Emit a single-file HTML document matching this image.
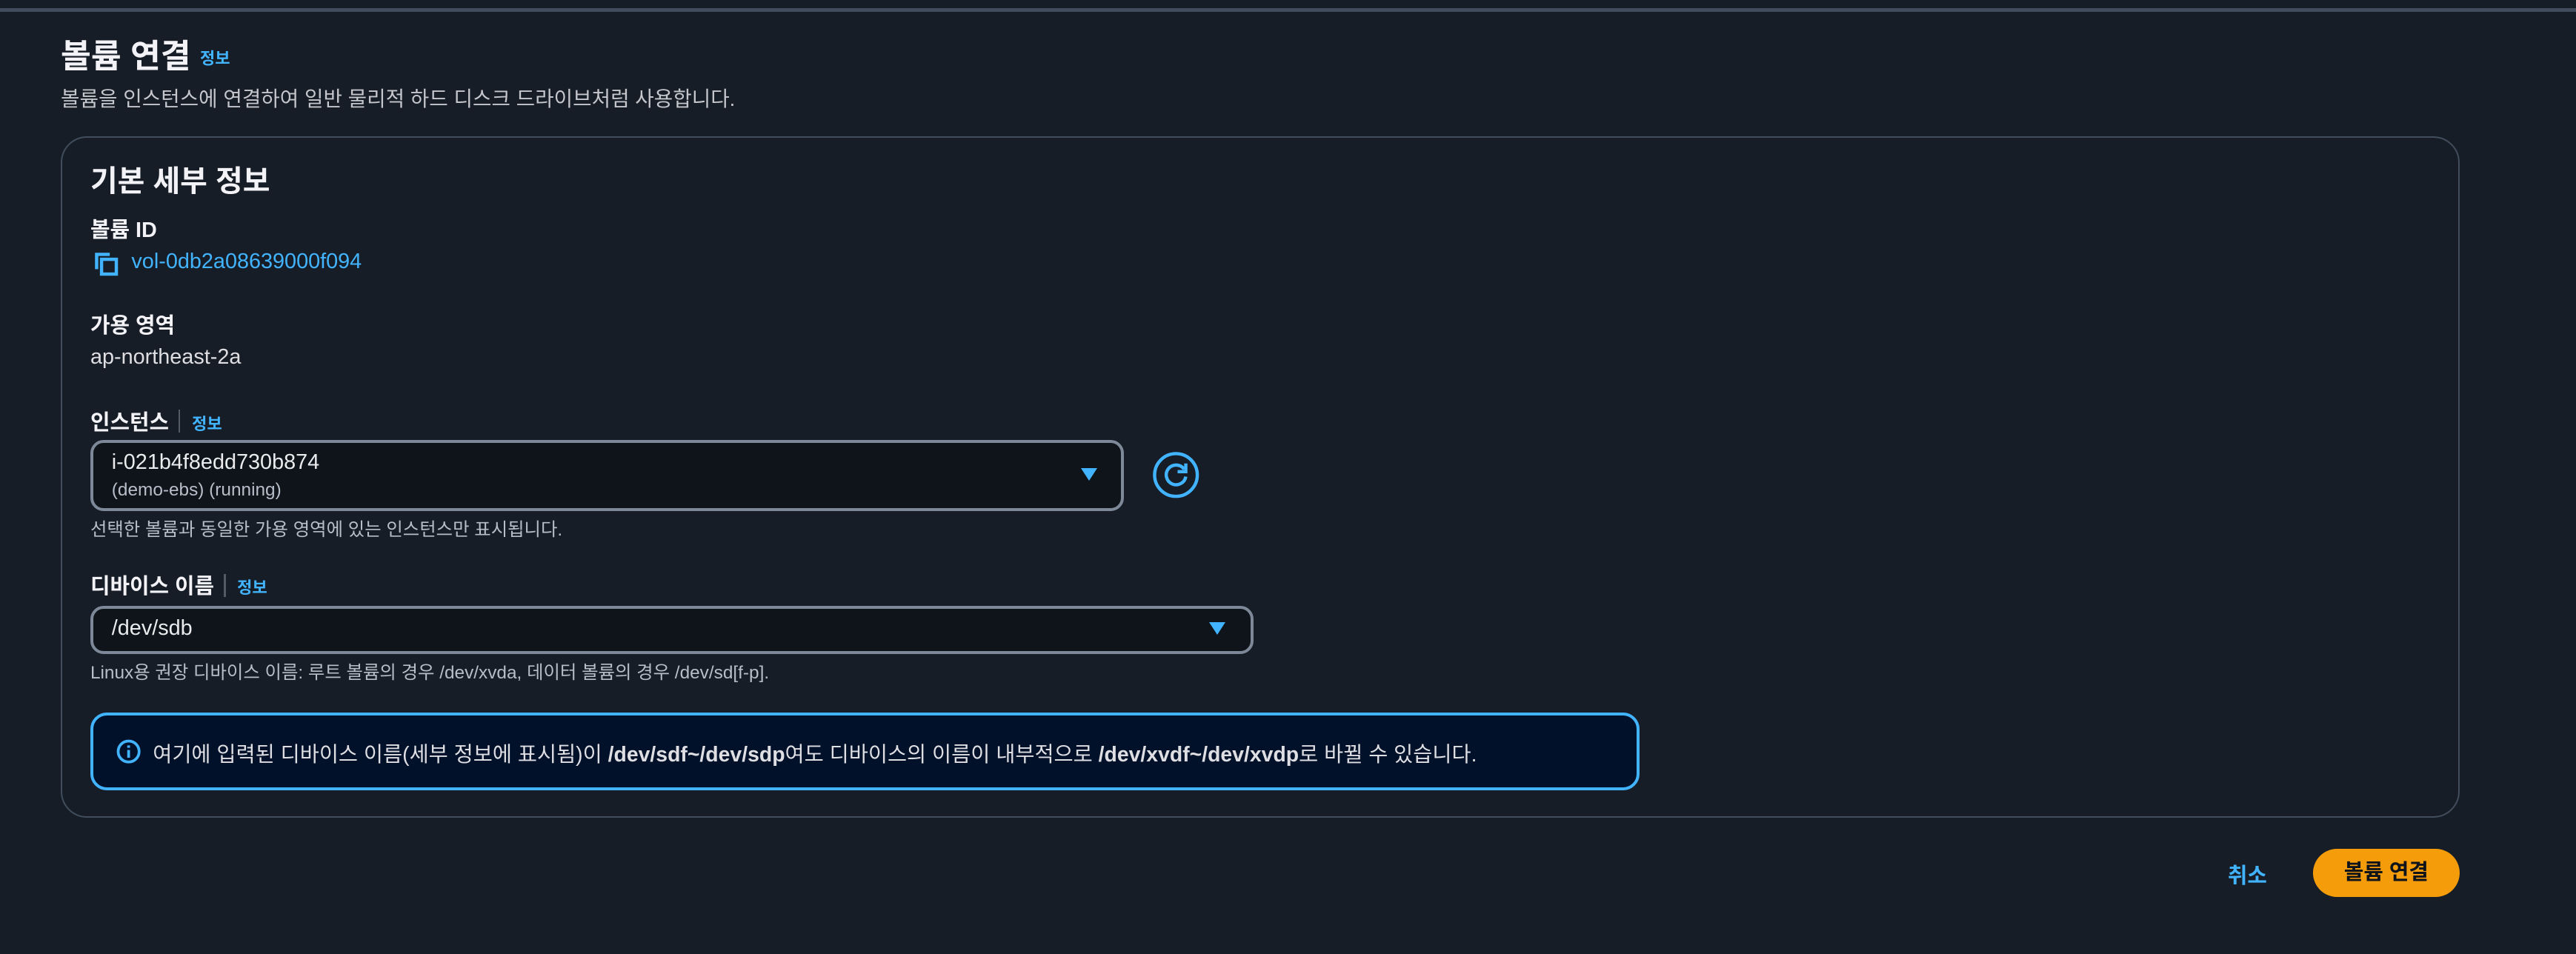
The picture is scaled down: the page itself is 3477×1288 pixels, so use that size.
<!DOCTYPE html>
<html><head><meta charset="utf-8"><style>
html,body{margin:0;padding:0;background:#161d26;}
body{width:3477px;height:1288px;overflow:hidden;}
#w{zoom:2.2175;width:1568px;height:581px;position:relative;font-family:"Liberation Sans","Noto Sans CJK KR",sans-serif;color:#dedee3;}
.a{position:absolute;white-space:nowrap;}
.lnk{color:#42b4ff;}
.b{font-weight:bold;}
.sel{position:absolute;border:2px solid #7d8998;border-radius:8px;box-sizing:border-box;background:#0f141a;}
.car{position:absolute;width:0;height:0;border-left:5px solid transparent;border-right:5px solid transparent;border-top:8px solid #42b4ff;}
.lbl{font-size:13px;font-weight:bold;color:#f3f3f7;}
.hint{font-size:11px;color:#b6bec9;}
.sep{display:inline-block;width:1px;height:14px;background:#545b64;vertical-align:-2px;margin:0 7px 0 6px;}
</style></head><body><div id="w">
<div class="a" style="left:0;top:5px;width:1568px;height:2px;background:#414d5c"></div>
<div class="a" style="left:37px;top:18px;font-size:20px;font-weight:bold;color:#f3f3f7">볼륨 연결 <span class="lnk" style="font-size:10px;vertical-align:2px">정보</span></div>
<div class="a" style="left:37px;top:50px;font-size:12.5px;color:#c6c6cd">볼륨을 인스턴스에 연결하여 일반 물리적 하드 디스크 드라이브처럼 사용합니다.</div>
<div class="a" style="left:37px;top:83px;width:1460px;height:415px;box-sizing:border-box;border:1px solid #414d5c;border-radius:16px"></div>
<div class="a" style="left:55px;top:96px;font-size:18px;font-weight:bold;color:#f3f3f7">기본 세부 정보</div>
<div class="a lbl" style="left:55px;top:130px">볼륨 ID</div>
<svg class="a" style="left:57px;top:153px" width="16" height="16" viewBox="0 0 16 16"><path d="M2 11V2h8" fill="none" stroke="#42b4ff" stroke-width="2"/><rect x="5" y="5" width="9" height="9" fill="none" stroke="#42b4ff" stroke-width="2"/></svg>
<div class="a lnk" style="left:80px;top:152px;font-size:13px">vol-0db2a08639000f094</div>
<div class="a lbl" style="left:55px;top:188px">가용 영역</div>
<div class="a" style="left:55px;top:210px;font-size:13px">ap-northeast-2a</div>
<div class="a lbl" style="left:55px;top:247px">인스턴스<span class="sep"></span><span class="lnk" style="font-size:10px">정보</span></div>
<div class="sel" style="left:55px;top:268px;width:629px;height:43px"></div>
<div class="a" style="left:68px;top:274px;font-size:13px;color:#e9ebed">i-021b4f8edd730b874</div>
<div class="a" style="left:68px;top:292px;font-size:11px;color:#b6bec9">(demo-ebs) (running)</div>
<div class="car" style="left:658px;top:285px"></div>
<svg class="a" style="left:701px;top:274px" width="30" height="30" viewBox="0 0 30 30"><circle cx="15" cy="15" r="13" fill="none" stroke="#42b4ff" stroke-width="2"/><path d="M20 11.5A6 6 0 1 0 21 16" fill="none" stroke="#42b4ff" stroke-width="2"/><path d="M21 8v5h-5" fill="none" stroke="#42b4ff" stroke-width="2"/></svg>
<div class="a hint" style="left:55px;top:314px">선택한 볼륨과 동일한 가용 영역에 있는 인스턴스만 표시됩니다.</div>
<div class="a lbl" style="left:55px;top:347px">디바이스 이름<span class="sep"></span><span class="lnk" style="font-size:10px">정보</span></div>
<div class="sel" style="left:55px;top:369px;width:708px;height:29px"></div>
<div class="a" style="left:68px;top:375px;font-size:13px;color:#e9ebed">/dev/sdb</div>
<div class="car" style="left:736px;top:379px"></div>
<div class="a hint" style="left:55px;top:401px">Linux용 권장 디바이스 이름: 루트 볼륨의 경우 /dev/xvda, 데이터 볼륨의 경우 /dev/sd[f-p].</div>
<div class="a" style="left:55px;top:434px;width:943px;height:47px;box-sizing:border-box;border:2px solid #42b4ff;border-radius:10px;background:#001129"></div>
<svg class="a" style="left:71px;top:450px" width="15" height="15" viewBox="0 0 16 16"><circle cx="8" cy="8" r="6.8" fill="none" stroke="#42b4ff" stroke-width="1.8"/><path d="M8 7v5M8 4v1.6" stroke="#42b4ff" stroke-width="1.8"/></svg>
<div class="a" style="left:93px;top:449px;font-size:12.8px;color:#dedee3">여기에 입력된 디바이스 이름(세부 정보에 표시됨)이 <b>/dev/sdf~/dev/sdp</b>여도 디바이스의 이름이 내부적으로 <b>/dev/xvdf~/dev/xvdp</b>로 바뀔 수 있습니다.</div>
<div class="a lnk b" style="left:1356px;top:523px;font-size:13px">취소</div>
<div class="a b" style="left:1408px;top:517px;width:89px;height:29px;border-radius:15px;background:#f59c0b;color:#0f141a;font-size:13px;text-align:center;line-height:29px">볼륨 연결</div>
</div></body></html>
